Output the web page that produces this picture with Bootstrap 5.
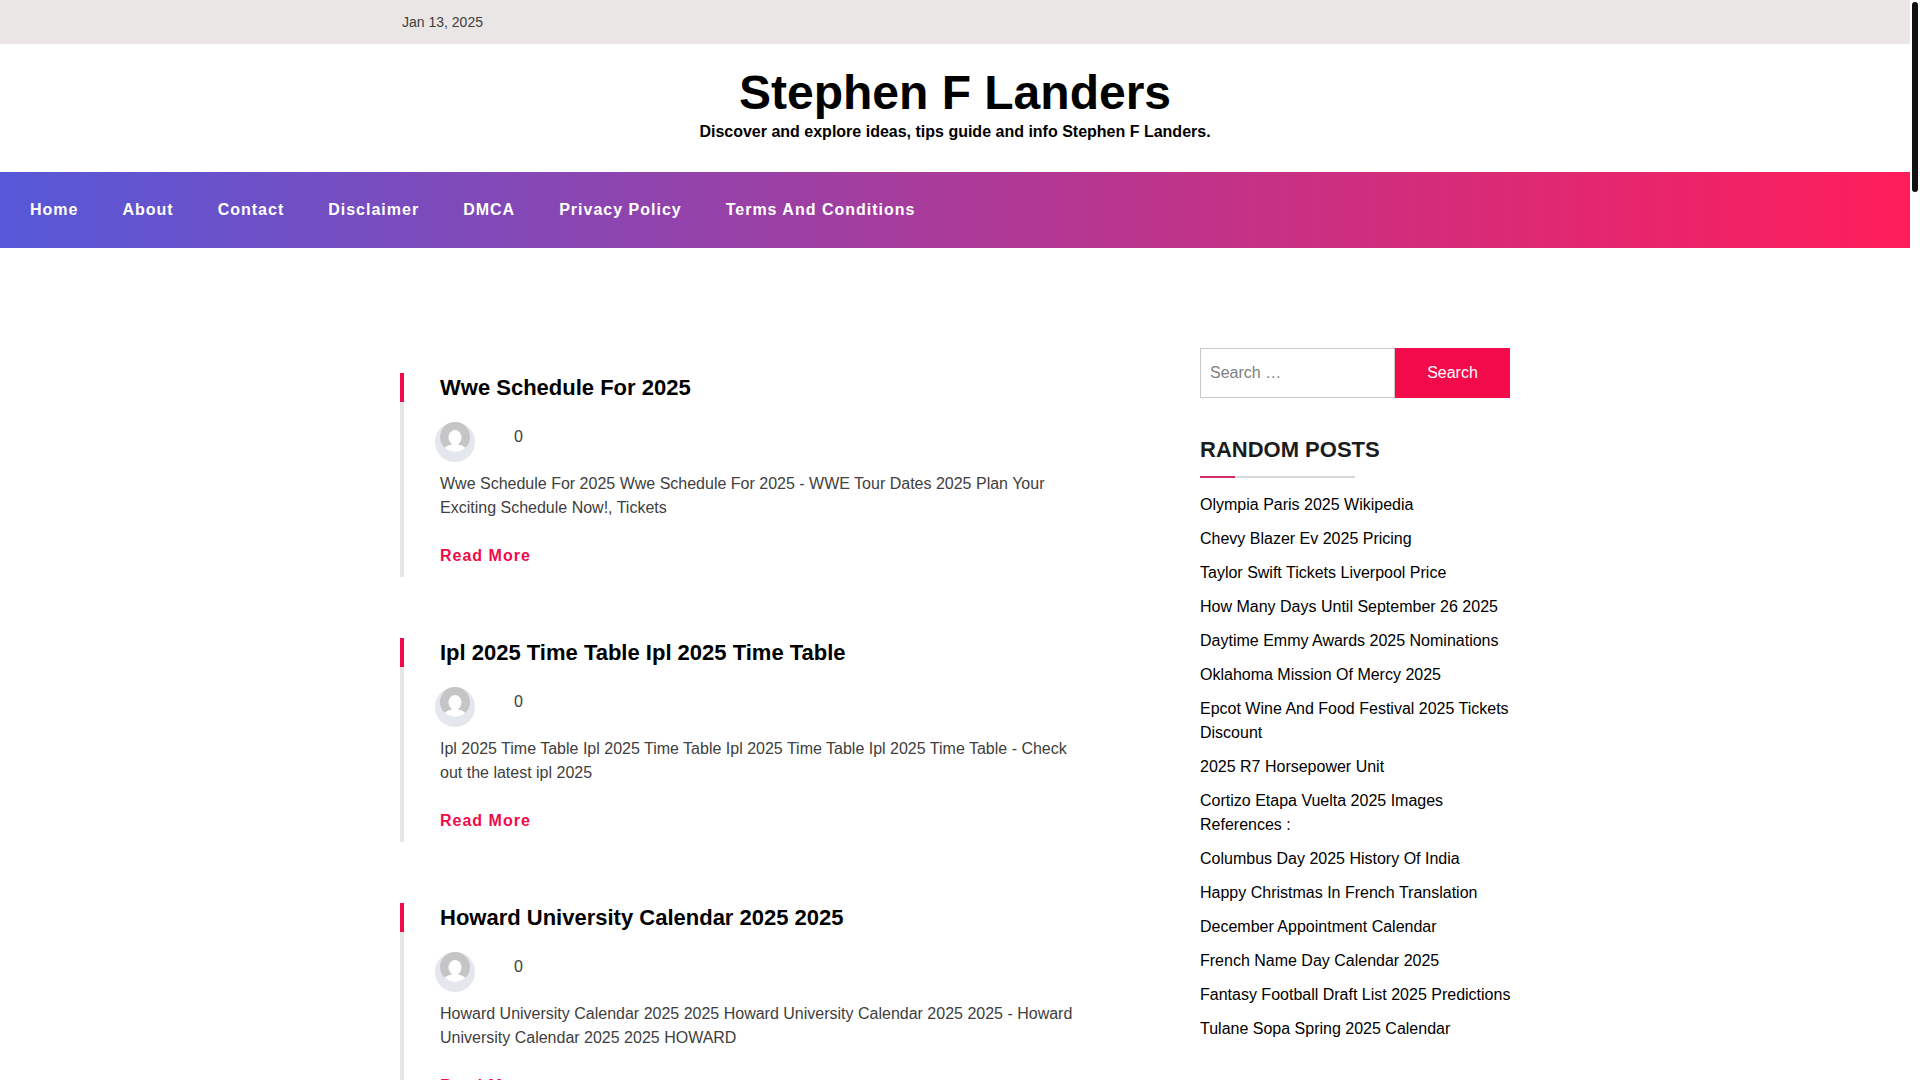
<!DOCTYPE html>
<html lang="en">
<head>
<meta charset="utf-8">
<meta name="viewport" content="width=device-width, initial-scale=1">
<title>Stephen F Landers</title>
<link href="https://cdn.jsdelivr.net/npm/bootstrap@5.3.0/dist/css/bootstrap.min.css" rel="stylesheet">
<style>
  body { font-family: "Liberation Sans", Arial, sans-serif; font-size: 16px; line-height: 24px; color: #404040; background: #fff; }
  a { text-decoration: none; }
  .page-body { min-width: 0; }
  .site-width { max-width: 1140px; --bs-gutter-x: 30px; }
  .site-width > .row { --bs-gutter-x: 30px; }
  .scroll-rail { width: 10px; padding: 2px; }
  .scroll-thumb { height: 190px; border-radius: 3px; background: #111; }
  .top-strip { background: #e9e6e5; font-size: 14px; }
  .top-date { padding: 10px 2px; }
  .site-head { padding: 21px 0 28px; color: #000; }
  .site-title { font-size: 48px; line-height: 55px; font-weight: 700; }
  .site-title a { color: #000; }
  .main-menu { background: linear-gradient(to right, #5658d8, #ff1d5a); padding: 26px 30px; }
  .main-menu .navbar-nav { column-gap: 44px; }
  .main-menu .navbar-nav .nav-link { color: #fff; font-weight: 700; letter-spacing: 1px; padding: 0; }
  .content-area { padding-top: 100px; }
  .post-list { padding-top: 25px; row-gap: 61px; }
  .post-item { padding: 0 40px 9px 36px; border-left: 4px solid #e6e6e6; }
  .post-item::before { content: ""; position: absolute; left: -4px; top: 0; width: 4px; height: 29px; background: #f20a4b; }
  .post-title { font-size: 22px; line-height: 29px; font-weight: 700; margin-bottom: 20px; }
  .post-title a { color: #000; }
  .post-meta { margin-left: -5px; margin-bottom: 10px; column-gap: 39px; }
  .comment-count { padding-top: 3px; }
  .read-more { color: #f20a4b; font-weight: 700; letter-spacing: 1px; }
  .side-area { padding-left: 55px; }
  .search-box { height: 50px; border: 1px solid #c8c8c8; border-radius: 0; padding: 0 9px; font-size: 16px; }
  .search-box::placeholder { color: #808080; }
  .search-btn { width: 115px; background: #f20a4b; color: #fff; border: 0; border-radius: 0; flex: none; }
  .search-btn:hover { background: #d00840; color: #fff; }
  .side-title { font-size: 22px; line-height: 29px; font-weight: 700; color: #1c1c1c; margin: 37px 0 12px; }
  .side-rule { width: 50%; height: 2px; background: #d9d9d9; margin-bottom: 15px; }
  .side-rule span { width: 35px; height: 2px; background: #d12e63; }
  .side-list { row-gap: 10px; margin: 0 -8px 0 0; }
  .side-list a { color: #000; }
</style>
<script src="https://cdn.jsdelivr.net/npm/bootstrap@5.3.0/dist/js/bootstrap.bundle.min.js"></script>
</head>
<body>
<svg class="position-absolute" width="0" height="0" aria-hidden="true">
  <clipPath id="face"><circle cx="20" cy="15" r="15"/></clipPath>
  <symbol id="avatar" viewBox="0 0 40 40">
    <circle cx="20" cy="20" r="20" fill="#e4e7ed"/>
    <g clip-path="url(#face)">
      <rect x="5" width="30" height="30" fill="#c5c5c5"/>
      <ellipse cx="20" cy="15.500" rx="6.500" ry="7.500" fill="#fff"/>
      <path d="M17 20h6v2.500c3 .3 5.500 1.500 8 4V31H9v-4.500c2.500-2.500 5-3.700 8-4z" fill="#fff"/>
    </g>
  </symbol>
</svg>
<div class="d-flex vh-100 overflow-hidden">
  <div class="page-body flex-grow-1">
    <div class="top-strip">
      <div class="container site-width"><div class="top-date">Jan 13, 2025</div></div>
    </div>
    <header class="site-head text-center">
      <h1 class="site-title m-0"><a href="#">Stephen F Landers</a></h1>
      <p class="fw-bold m-0">Discover and explore ideas, tips guide and info Stephen F Landers.</p>
    </header>
    <nav class="navbar navbar-expand main-menu" aria-label="Main menu">
      <ul class="navbar-nav">
        <li class="nav-item"><a class="nav-link" href="#">Home</a></li>
        <li class="nav-item"><a class="nav-link" href="#">About</a></li>
        <li class="nav-item"><a class="nav-link" href="#">Contact</a></li>
        <li class="nav-item"><a class="nav-link" href="#">Disclaimer</a></li>
        <li class="nav-item"><a class="nav-link" href="#">DMCA</a></li>
        <li class="nav-item"><a class="nav-link" href="#">Privacy Policy</a></li>
        <li class="nav-item"><a class="nav-link" href="#">Terms And Conditions</a></li>
      </ul>
    </nav>
    <div class="container site-width content-area">
      <div class="row">
        <main class="col-lg-8">
          <div class="post-list d-flex flex-column">
            <article class="post-item position-relative">
              <h2 class="post-title"><a href="#">Wwe Schedule For 2025</a></h2>
              <div class="post-meta d-flex align-items-start">
                <svg width="40" height="40" role="img" aria-label="Author"><use href="#avatar"/></svg>
                <span class="comment-count">0</span>
              </div>
              <p class="mb-4">Wwe Schedule For 2025 Wwe Schedule For 2025 - WWE Tour Dates 2025 Plan Your Exciting Schedule Now!, Tickets</p>
              <a class="read-more d-block" href="#">Read More</a>
            </article>
            <article class="post-item position-relative">
              <h2 class="post-title"><a href="#">Ipl 2025 Time Table Ipl 2025 Time Table</a></h2>
              <div class="post-meta d-flex align-items-start">
                <svg width="40" height="40" role="img" aria-label="Author"><use href="#avatar"/></svg>
                <span class="comment-count">0</span>
              </div>
              <p class="mb-4">Ipl 2025 Time Table Ipl 2025 Time Table Ipl 2025 Time Table Ipl 2025 Time Table - Check out the latest ipl 2025</p>
              <a class="read-more d-block" href="#">Read More</a>
            </article>
            <article class="post-item position-relative">
              <h2 class="post-title"><a href="#">Howard University Calendar 2025 2025</a></h2>
              <div class="post-meta d-flex align-items-start">
                <svg width="40" height="40" role="img" aria-label="Author"><use href="#avatar"/></svg>
                <span class="comment-count">0</span>
              </div>
              <p class="mb-4">Howard University Calendar 2025 2025 Howard University Calendar 2025 2025 - Howard University Calendar 2025 2025 HOWARD</p>
              <a class="read-more d-block" href="#">Read More</a>
            </article>
          </div>
        </main>
        <aside class="col-lg-4 side-area">
          <form class="d-flex" role="search">
            <label class="visually-hidden" for="site-search">Search for:</label>
            <input class="form-control search-box" id="site-search" type="search" placeholder="Search …">
            <button class="btn search-btn" type="submit">Search</button>
          </form>
          <h2 class="side-title">RANDOM POSTS</h2>
          <div class="side-rule d-flex"><span></span></div>
          <ul class="side-list list-unstyled d-grid">
            <li><a href="#">Olympia Paris 2025 Wikipedia</a></li>
            <li><a href="#">Chevy Blazer Ev 2025 Pricing</a></li>
            <li><a href="#">Taylor Swift Tickets Liverpool Price</a></li>
            <li><a href="#">How Many Days Until September 26 2025</a></li>
            <li><a href="#">Daytime Emmy Awards 2025 Nominations</a></li>
            <li><a href="#">Oklahoma Mission Of Mercy 2025</a></li>
            <li><a href="#">Epcot Wine And Food Festival 2025 Tickets Discount</a></li>
            <li><a href="#">2025 R7 Horsepower Unit</a></li>
            <li><a href="#">Cortizo Etapa Vuelta 2025 Images References :</a></li>
            <li><a href="#">Columbus Day 2025 History Of India</a></li>
            <li><a href="#">Happy Christmas In French Translation</a></li>
            <li><a href="#">December Appointment Calendar</a></li>
            <li><a href="#">French Name Day Calendar 2025</a></li>
            <li><a href="#">Fantasy Football Draft List 2025 Predictions</a></li>
            <li><a href="#">Tulane Sopa Spring 2025 Calendar</a></li>
          </ul>
        </aside>
      </div>
    </div>
  </div>
  <div class="scroll-rail flex-shrink-0" aria-hidden="true"><div class="scroll-thumb"></div></div>
</div>
</body>
</html>
